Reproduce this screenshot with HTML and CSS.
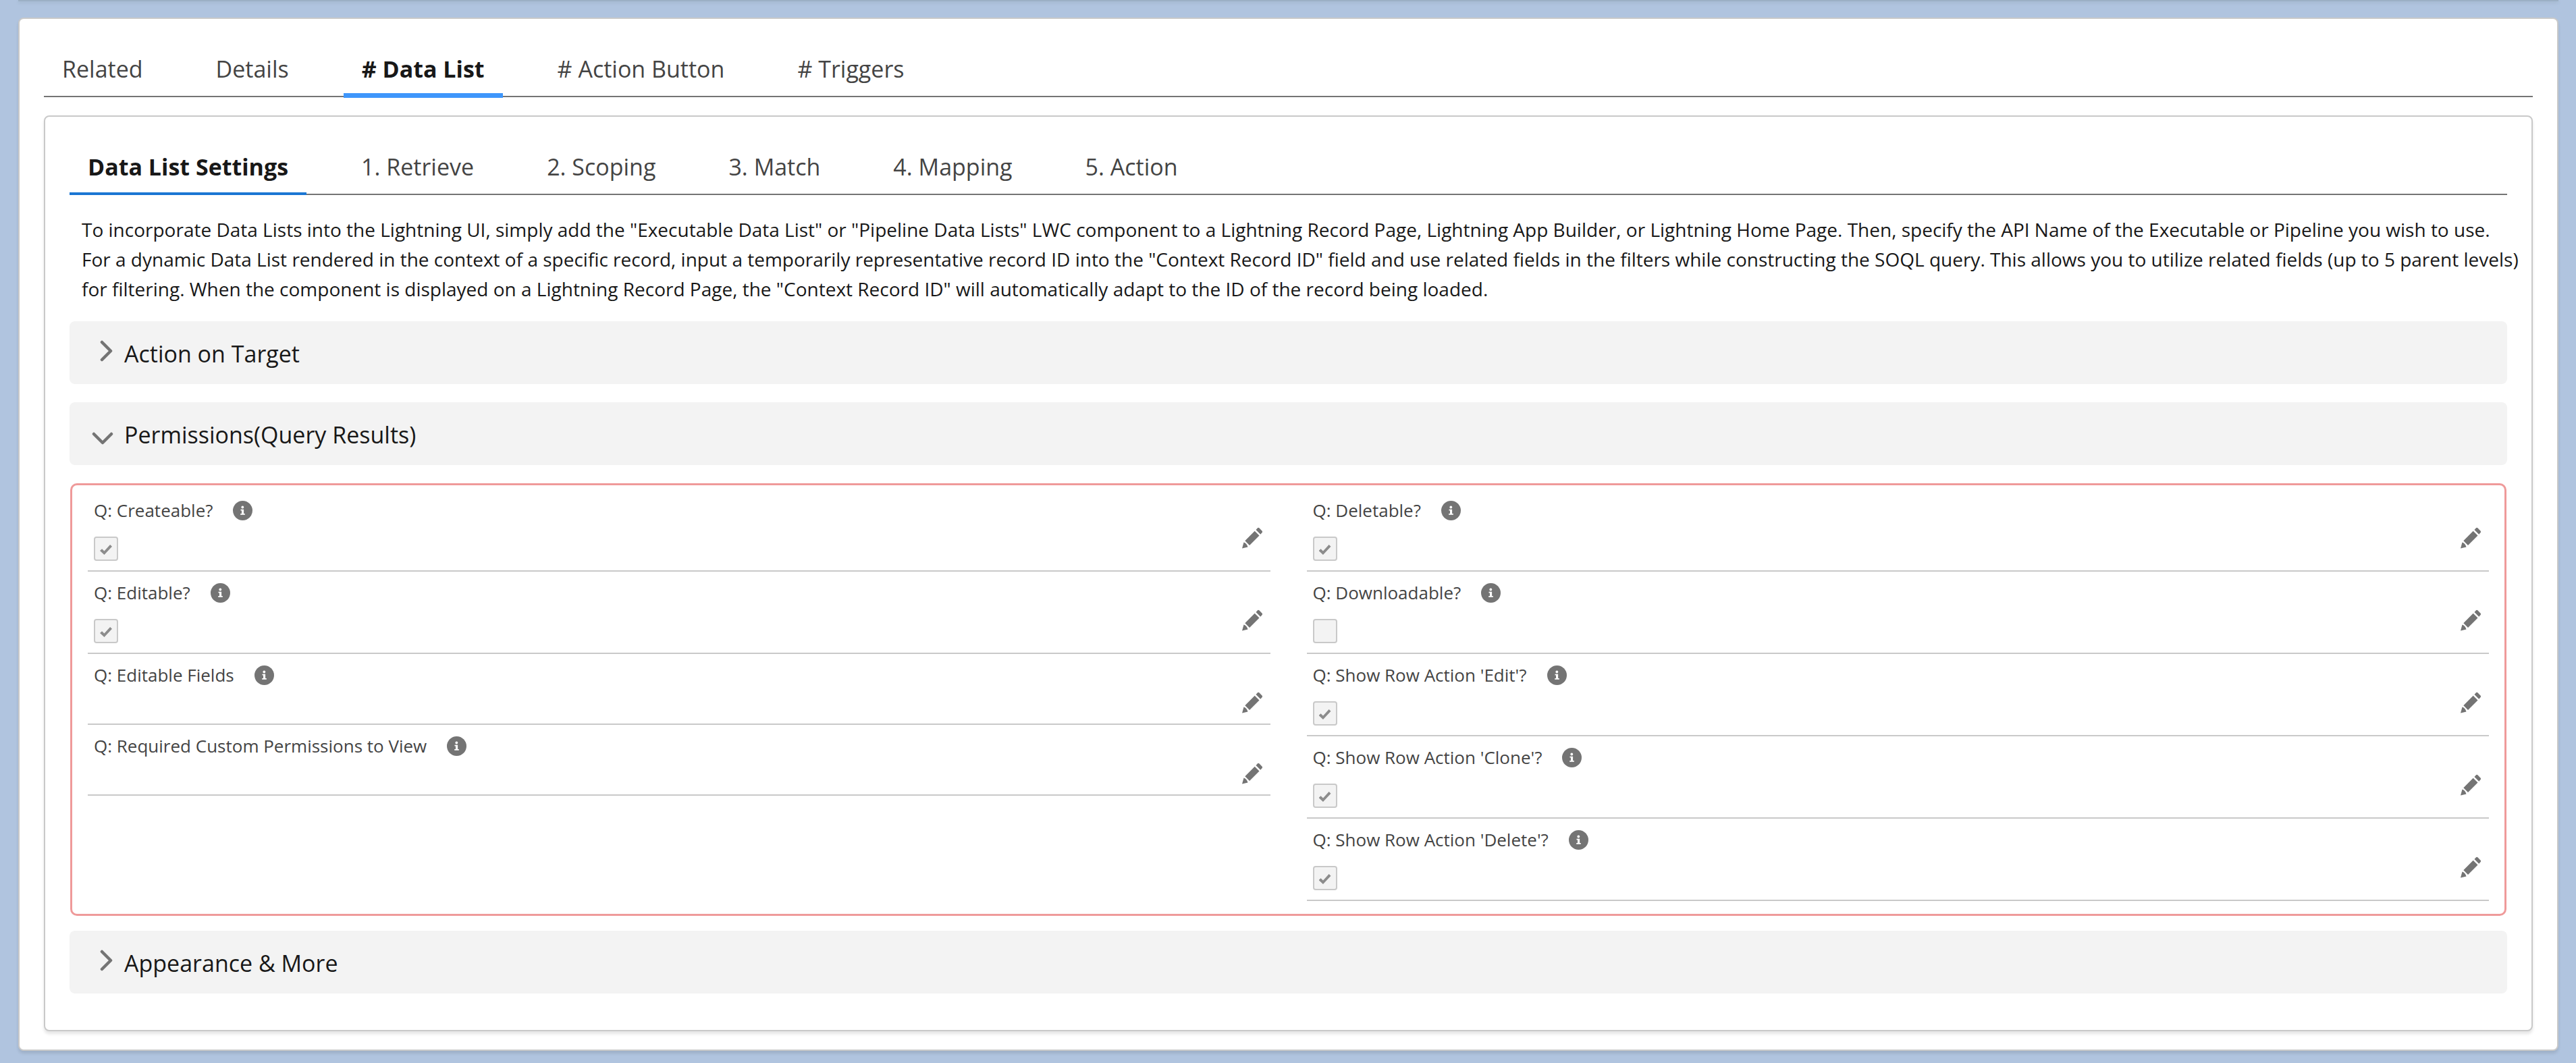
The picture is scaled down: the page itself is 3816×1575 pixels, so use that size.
FILE: index.html
```html
<!DOCTYPE html>
<html lang="en">
<head>
<meta charset="utf-8">
<title>Data List Settings</title>
<link rel="stylesheet" href="styles.css">
</head>
<body>
<svg class="sprite" aria-hidden="true">
  <symbol id="info" viewBox="0 0 29 29"><circle cx="14.500" cy="14.500" r="14.500" fill="#747474"/><circle cx="14.300" cy="9.500" r="1.900" fill="#fff"/><path d="M11.500 12.700h4.600v6.200h1.700v1.900h-6.600v-1.900h1.800v-4.300h-1.500z" fill="#fff"/></symbol>
  <symbol id="pencil" viewBox="0 0 31 32"><path d="M0.500 31.500L3 22.500Q7.500 24 9 29.500zM4.800 20.200L19.200 5.800L26 12.500L11.500 27zM21 4L23.500 1.200Q24.500 0.300 25.800 1.300L30.200 5.800Q31 7 30.200 8L27.700 10.700z" fill="#747474"/></symbol>
  <symbol id="right" viewBox="0 0 20 32"><path d="M3 3L16 16L3 29" fill="none" stroke="#747474" stroke-width="4.500" stroke-linecap="round" stroke-linejoin="round"/></symbol>
  <symbol id="down" viewBox="0 0 32 20"><path d="M3 3L16 16L29 3" fill="none" stroke="#747474" stroke-width="4.500" stroke-linecap="round" stroke-linejoin="round"/></symbol>
</svg>
<div class="previous"></div>
<main class="card">
  <div class="tabs tabs-main" role="tablist">
    <button class="tab" role="tab">Related</button>
    <button class="tab" role="tab">Details</button>
    <button class="tab active" role="tab" aria-selected="true"># Data List</button>
    <button class="tab" role="tab"># Action Button</button>
    <button class="tab" role="tab"># Triggers</button>
  </div>
  <div class="card inner">
    <div class="tabs" role="tablist">
      <button class="tab active" role="tab" aria-selected="true">Data List Settings</button>
      <button class="tab" role="tab">1. Retrieve</button>
      <button class="tab" role="tab">2. Scoping</button>
      <button class="tab" role="tab">3. Match</button>
      <button class="tab" role="tab">4. Mapping</button>
      <button class="tab" role="tab">5. Action</button>
    </div>
    <p class="intro">To incorporate Data Lists into the Lightning UI, simply add the "Executable Data List" or "Pipeline Data Lists" LWC component to a Lightning Record Page, Lightning App Builder, or Lightning Home Page. Then, specify the API Name of the Executable or Pipeline you wish to use.<br>For a dynamic Data List rendered in the context of a specific record, input a temporarily representative record ID into the "Context Record ID" field and use related fields in the filters while constructing the SOQL query. This allows you to utilize related fields (up to 5 parent levels)<br>for filtering. When the component is displayed on a Lightning Record Page, the "Context Record ID" will automatically adapt to the ID of the record being loaded.</p>
    <div class="sections">
      <button class="section" aria-expanded="false"><svg class="chev-right"><use href="#right"/></svg>Action on Target</button>
      <button class="section" aria-expanded="true"><svg class="chev-down"><use href="#down"/></svg>Permissions(Query Results)</button>
      <div class="fields">
        <div class="column">
          <div class="field"><div class="name"><label for="createable">Q: Createable?</label><svg class="info"><use href="#info"/></svg></div><input class="check" type="checkbox" id="createable" checked disabled><button class="edit" aria-label="Edit"><svg class="pencil"><use href="#pencil"/></svg></button></div>
          <div class="field"><div class="name"><label for="editable">Q: Editable?</label><svg class="info"><use href="#info"/></svg></div><input class="check" type="checkbox" id="editable" checked disabled><button class="edit" aria-label="Edit"><svg class="pencil"><use href="#pencil"/></svg></button></div>
          <div class="field empty"><div class="name"><span>Q: Editable Fields</span><svg class="info"><use href="#info"/></svg></div><button class="edit" aria-label="Edit"><svg class="pencil"><use href="#pencil"/></svg></button></div>
          <div class="field empty"><div class="name"><span>Q: Required Custom Permissions to View</span><svg class="info"><use href="#info"/></svg></div><button class="edit" aria-label="Edit"><svg class="pencil"><use href="#pencil"/></svg></button></div>
        </div>
        <div class="column">
          <div class="field"><div class="name"><label for="deletable">Q: Deletable?</label><svg class="info"><use href="#info"/></svg></div><input class="check" type="checkbox" id="deletable" checked disabled><button class="edit" aria-label="Edit"><svg class="pencil"><use href="#pencil"/></svg></button></div>
          <div class="field"><div class="name"><label for="downloadable">Q: Downloadable?</label><svg class="info"><use href="#info"/></svg></div><input class="check" type="checkbox" id="downloadable" disabled><button class="edit" aria-label="Edit"><svg class="pencil"><use href="#pencil"/></svg></button></div>
          <div class="field"><div class="name"><label for="row-edit">Q: Show Row Action 'Edit'?</label><svg class="info"><use href="#info"/></svg></div><input class="check" type="checkbox" id="row-edit" checked disabled><button class="edit" aria-label="Edit"><svg class="pencil"><use href="#pencil"/></svg></button></div>
          <div class="field"><div class="name"><label for="row-clone">Q: Show Row Action 'Clone'?</label><svg class="info"><use href="#info"/></svg></div><input class="check" type="checkbox" id="row-clone" checked disabled><button class="edit" aria-label="Edit"><svg class="pencil"><use href="#pencil"/></svg></button></div>
          <div class="field"><div class="name"><label for="row-delete">Q: Show Row Action 'Delete'?</label><svg class="info"><use href="#info"/></svg></div><input class="check" type="checkbox" id="row-delete" checked disabled><button class="edit" aria-label="Edit"><svg class="pencil"><use href="#pencil"/></svg></button></div>
        </div>
      </div>
      <button class="section" aria-expanded="false"><svg class="chev-right"><use href="#right"/></svg>Appearance &amp; More</button>
    </div>
  </div>
</main>
</body>
</html>
```
FILE: styles.css
```css
* { box-sizing: border-box; }
body {
  margin: 0;
  padding: 0 26px 18px 27px;
  background: #b0c4df;
  color: #181818;
  font-family: "Segoe UI", "Open Sans", "Noto Sans", sans-serif;
}
button {
  border: 0;
  padding: 0;
  background: none;
  color: inherit;
  font: inherit;
}
.sprite { display: none; }

/* lower edge of the card above */
.previous {
  height: 2px;
  margin-bottom: 24px;
  background: #9cb0c5;
  box-shadow: 0 2px 4px #9cb0c5;
}
.card {
  border: 2px solid #c9c9c9;
  border-radius: 8px;
  background: #fff;
  padding: 34px 36px 27px;
  box-shadow: 0 4px 4px rgba(0, 0, 0, 0.1);
}
.inner { margin-top: 27px; padding-bottom: 54px; }

.tabs {
  display: flex;
  gap: 54px;
  border-bottom: 2px solid #747474;
}
.tab {
  position: relative;
  height: 80px;
  padding: 0 27px;
  color: #444;
  font-size: 34px;
}
.tab.active { color: #181818; font-weight: 700; }
.tab.active::after {
  content: "";
  position: absolute;
  left: 0;
  right: 0;
  bottom: -2px;
  height: 4px;
  background: #1b76d3;
}
.tabs-main .active::after {
  bottom: -3px;
  height: 7px;
  background: #3e96fb;
}

.intro {
  margin: 29px -18px 0 18px;
  font-size: 28px;
  line-height: 44px;
}
.sections { margin-top: 26px; }
.section {
  display: flex;
  align-items: center;
  width: 100%;
  height: 93px;
  margin-bottom: 27px;
  padding: 2px 33px 0;
  border-radius: 8px;
  background: #f3f3f3;
  font-size: 34px;
  text-align: left;
}
.chev-right {
  width: 20px;
  height: 32px;
  margin: 0 16px 8px 12px;
}
.chev-down {
  width: 32px;
  height: 20px;
  margin: 12px 16px 0 0;
}
.section:last-child { margin-bottom: 0; }

.fields {
  display: grid;
  grid-template-columns: 1fr 1fr;
  gap: 54px;
  margin: 0 1px 22px;
  padding: 6px 23px 19px;
  border: 3px solid #ef9a9a;
  border-radius: 10px;
}
.field {
  display: grid;
  grid-template-columns: 1fr 32px;
  grid-template-rows: 50px 1fr;
  height: 122px;
  padding: 6px 11px 14px 9px;
  border-bottom: 2px solid #c9c9c9;
}
.field.empty { height: 105px; }
.name {
  display: flex;
  align-items: center;
  gap: 30px;
  height: 50px;
  color: #444;
  font-size: 26px;
}
.info { width: 29px; height: 29px; }
.check {
  appearance: none;
  grid-column: 1;
  grid-row: 2;
  width: 36px;
  height: 36px;
  margin: 14px 0 0;
  padding: 10px 7px;
  border: 2px solid #c9c9c9;
  border-radius: 4px;
  background: #f3f3f3;
}
.check:checked::before {
  content: "";
  display: block;
  width: 18px;
  height: 15px;
  background: #8c8c8c;
  clip-path: polygon(0 60%, 17% 42%, 36% 63%, 84% 0, 100% 18%, 36% 100%);
}
.edit {
  grid-column: 2;
  grid-row: 2;
  align-self: start;
  height: 32px;
}
.pencil { display: block; width: 32px; height: 32px; }
```
